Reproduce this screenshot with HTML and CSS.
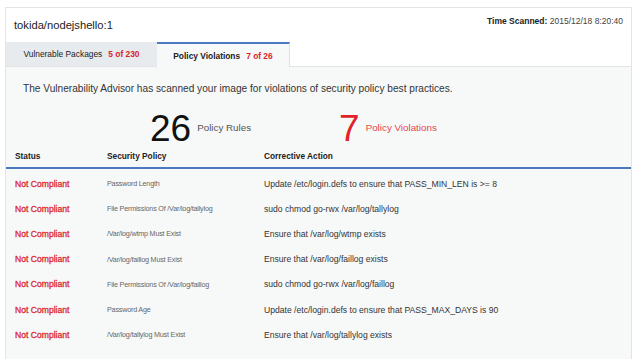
FILE: index.html
```html
<!DOCTYPE html>
<html lang="en">
<head>
    <meta charset="UTF-8">
    <meta name="viewport" content="width=device-width, initial-scale=1.0">
    <title>tokida/nodejshello:1</title>
    <link rel="stylesheet" href="styles.css">
</head>
<body>

<div class="card">
    <div class="header">
        <div class="title">tokida/nodejshello:1</div>
        <div class="scanned"><b>Time Scanned:</b> 2015/12/18 8:20:40</div>
    </div>

    <div class="tabs">
        <div class="tab">Vulnerable Packages <span class="count">5 of 230</span></div>
        <div class="tab active">Policy Violations <span class="count">7 of 26</span></div>
    </div>

    <div class="content">
        <p class="intro">The Vulnerability Advisor has scanned your image for violations of security policy best practices.</p>

        <div class="stats">
            <div class="stat">
                <span class="big">26</span>
                <span class="label">Policy Rules</span>
            </div>
            <div class="stat bad">
                <span class="big">7</span>
                <span class="label">Policy Violations</span>
            </div>
        </div>

        <div class="row head">
            <div>Status</div>
            <div>Security Policy</div>
            <div>Corrective Action</div>
        </div>

        <div class="rows">
            <div class="row">
                <div class="status">Not Compliant</div>
                <div class="policy">Password Length</div>
                <div class="action">Update /etc/login.defs to ensure that PASS_MIN_LEN is &gt;= 8</div>
            </div>
            <div class="row">
                <div class="status">Not Compliant</div>
                <div class="policy">File Permissions Of /Var/log/tallylog</div>
                <div class="action">sudo chmod go-rwx /var/log/tallylog</div>
            </div>
            <div class="row">
                <div class="status">Not Compliant</div>
                <div class="policy">/Var/log/wtmp Must Exist</div>
                <div class="action">Ensure that /var/log/wtmp exists</div>
            </div>
            <div class="row">
                <div class="status">Not Compliant</div>
                <div class="policy">/Var/log/faillog Must Exist</div>
                <div class="action">Ensure that /var/log/faillog exists</div>
            </div>
            <div class="row">
                <div class="status">Not Compliant</div>
                <div class="policy">File Permissions Of /Var/log/faillog</div>
                <div class="action">sudo chmod go-rwx /var/log/faillog</div>
            </div>
            <div class="row">
                <div class="status">Not Compliant</div>
                <div class="policy">Password Age</div>
                <div class="action">Update /etc/login.defs to ensure that PASS_MAX_DAYS is 90</div>
            </div>
            <div class="row">
                <div class="status">Not Compliant</div>
                <div class="policy">/Var/log/tallylog Must Exist</div>
                <div class="action">Ensure that /var/log/tallylog exists</div>
            </div>
        </div>
    </div>
</div>

</body>
</html>
```

FILE: styles.css
```css
body {
    margin: 0;
    background-color: #fff;
    font-family: "Liberation Sans", Arial, sans-serif;
    color: #333;
    overflow: hidden;
}

.card {
    margin: 7px 8px 0 5px;
    border: 1px solid #e2e4e6;
    border-bottom: none;
    background-color: #fff;
}

.header {
    display: flex;
    justify-content: space-between;
    height: 34px;
    padding: 0 8px 0 8px;
}

.title {
    font-size: 11.2px;
    color: #222;
    padding-top: 11px;
}

.scanned {
    font-size: 8.5px;
    color: #444;
    padding-top: 8px;
}

.scanned b {
    color: #222;
}

.tabs {
    display: flex;
    height: 24px;
    border-bottom: 1px solid #e2e4e6;
}

.tab {
    display: flex;
    align-items: center;
    justify-content: center;
    width: 151px;
    background-color: #e8ebed;
    font-size: 8.4px;
    color: #222;
}

.tab .count {
    margin-left: 6px;
    font-weight: bold;
    color: #d9242b;
}

.tab.active {
    width: 133px;
    box-sizing: border-box;
    height: 25px;
    background-color: #f7f9f9;
    border-top: 2px solid #4a78c1;
    border-right: 1px solid #dfe2e4;
    font-weight: bold;
}

.content {
    background-color: #f7f9f9;
    padding-bottom: 20px;
}

.intro {
    margin: 0;
    padding: 16px 0 0 17px;
    font-size: 10.15px;
    line-height: 12px;
    color: #333;
}

.stats {
    display: flex;
    align-items: center;
    height: 42px;
    margin-top: 12px;
    padding-left: 144px;
    gap: 88px;
}

.stat {
    display: flex;
    align-items: center;
    gap: 6px;
}

.big {
    font-size: 37px;
    line-height: 1;
    color: #111;
}

.label {
    font-size: 9.8px;
    color: #555;
    margin-bottom: 2px;
}

.stat.bad .big {
    color: #e2222a;
}

.stat.bad .label {
    color: #e5464e;
}

.row {
    display: grid;
    grid-template-columns: 92px 157px 1fr;
    align-items: center;
    height: 25.2px;
    padding-left: 9px;
}

.row.head {
    box-sizing: border-box;
    height: 20px;
    padding-bottom: 4px;
    border-bottom: 2px solid #4a78c1;
    font-size: 8.3px;
    font-weight: bold;
    color: #222;
}

.rows {
    padding-top: 2px;
}

.status {
    font-size: 8.6px;
    color: #dc2a33;
    -webkit-text-stroke: 0.3px #dc2a33;
}

.policy {
    font-size: 7.2px;
    color: #666;
    letter-spacing: -0.2px;
}

.action {
    font-size: 8.6px;
    color: #333;
}
```
